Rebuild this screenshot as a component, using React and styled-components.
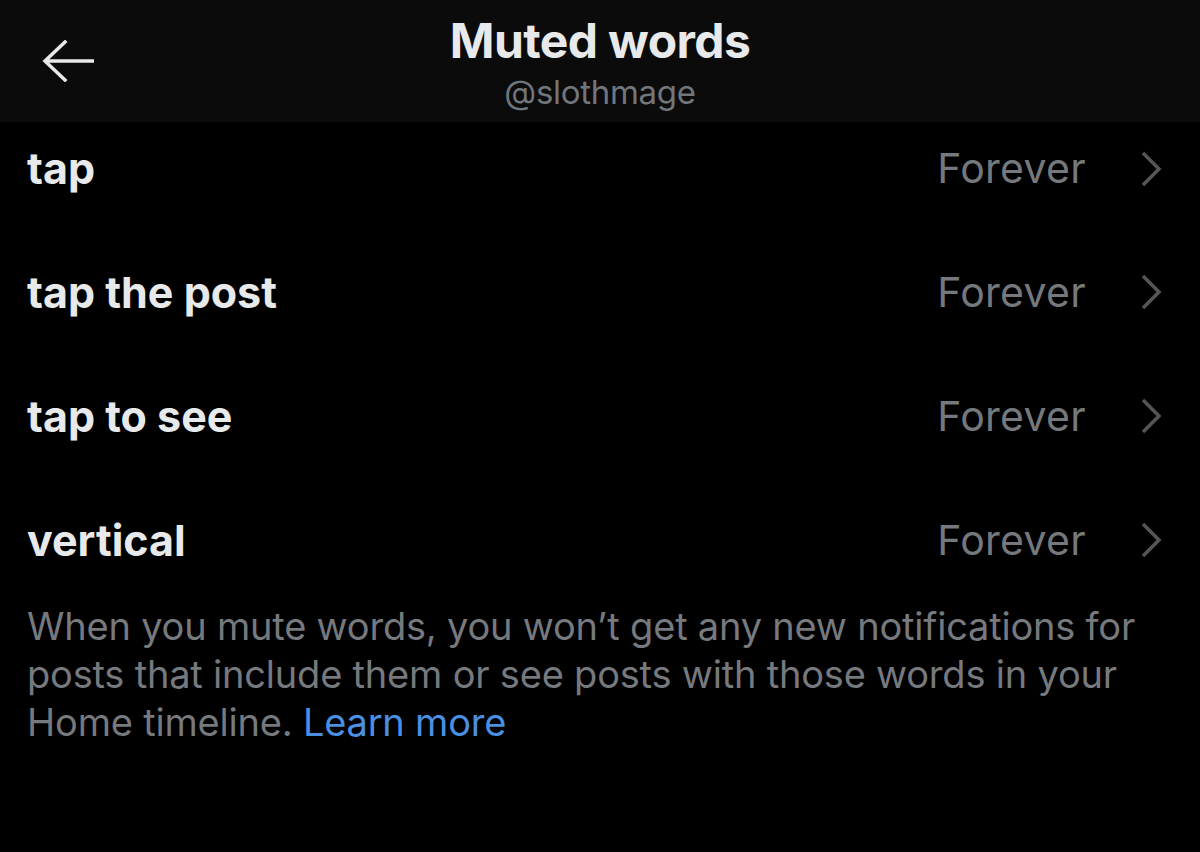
import React from "react";
import styled, { createGlobalStyle } from "styled-components";

const Global = createGlobalStyle`
  html, body { margin: 0; padding: 0; background: #000; }
  body { font-family: Inter, "Noto Sans", sans-serif; -webkit-font-smoothing: antialiased; }
  #root { width: 1200px; min-height: 852px; background: #000; }
`;

const Page = styled.div`
  width: 1200px;
  height: 852px;
  background: #000;
  display: flex;
  flex-direction: column;
  overflow: hidden;
`;

const Header = styled.header`
  height: 122px;
  background: #0b0b0b;
  display: grid;
  grid-template-columns: 120px 1fr 120px;
  align-items: start;
  flex-shrink: 0;
`;

const BackButton = styled.button`
  background: none;
  border: none;
  padding: 0 0 0 42px;
  margin-top: 40px;
  height: 42px;
  display: flex;
  align-items: center;
`;

const TitleBlock = styled.div`
  display: flex;
  flex-direction: column;
  align-items: center;
  padding-top: 13px;
`;

const Title = styled.h1`
  margin: 0;
  font-size: 48px;
  line-height: 56px;
  font-weight: 700;
  color: #e7e9ea;
  letter-spacing: -0.6px;
`;

const Handle = styled.div`
  font-size: 33px;
  line-height: 40px;
  margin-top: 3px;
  color: #71767b;
  letter-spacing: -0.3px;
`;

const List = styled.ul`
  list-style: none;
  margin: 0;
  padding: 0;
`;

const Row = styled.li`
  height: 124px;
  display: flex;
  align-items: center;
  padding: 0 38px 0 27px;
  box-sizing: border-box;
  &:first-child {
    height: 108px;
    align-items: flex-start;
    padding-top: 20px;
  }
`;

const Word = styled.span`
  flex: 1;
  font-size: 43px;
  line-height: 52px;
  font-weight: 700;
  color: #e7e9ea;
`;

const Duration = styled.span`
  font-size: 41px;
  line-height: 52px;
  color: #75787c;
  margin-right: 54px;
  letter-spacing: 0.3px;
`;

const Chevron = styled.svg`
  width: 22px;
  height: 36px;
  flex-shrink: 0;
  align-self: center;
  ${Row}:first-child & { align-self: flex-start; margin-top: 9px; }
`;

const Note = styled.p`
  margin: 0;
  padding: 0 40px 0 27px;
  font-size: 38px;
  line-height: 48px;
  color: #76797d;
  letter-spacing: -0.2px;
`;

const Link = styled.a`
  color: #4a90e2;
  text-decoration: none;
`;

const words = ["tap", "tap the post", "tap to see", "vertical"];

export default function App() {
  return (
    <Page>
      <Global />
      <Header>
        <BackButton aria-label="Back">
          <svg width="52" height="42" viewBox="0 0 52 42" fill="none">
            <path d="M51 21H4M23 2L3 21L23 40" stroke="#e7e9ea" strokeWidth="3.5" strokeLinecap="square" strokeLinejoin="miter" />
          </svg>
        </BackButton>
        <TitleBlock>
          <Title>Muted words</Title>
          <Handle>@slothmage</Handle>
        </TitleBlock>
        <div />
      </Header>
      <List>
        {words.map((w) => (
          <Row key={w}>
            <Word>{w}</Word>
            <Duration>Forever</Duration>
            <Chevron viewBox="0 0 22 36" fill="none">
              <path d="M3 2L19 18L3 34" stroke="#565656" strokeWidth="3.5" />
            </Chevron>
          </Row>
        ))}
      </List>
      <Note>
        When you mute words, you won’t get any new notifications for posts that include them or see posts with those words in your Home timeline. <Link href="#">Learn more</Link>
      </Note>
    </Page>
  );
}
